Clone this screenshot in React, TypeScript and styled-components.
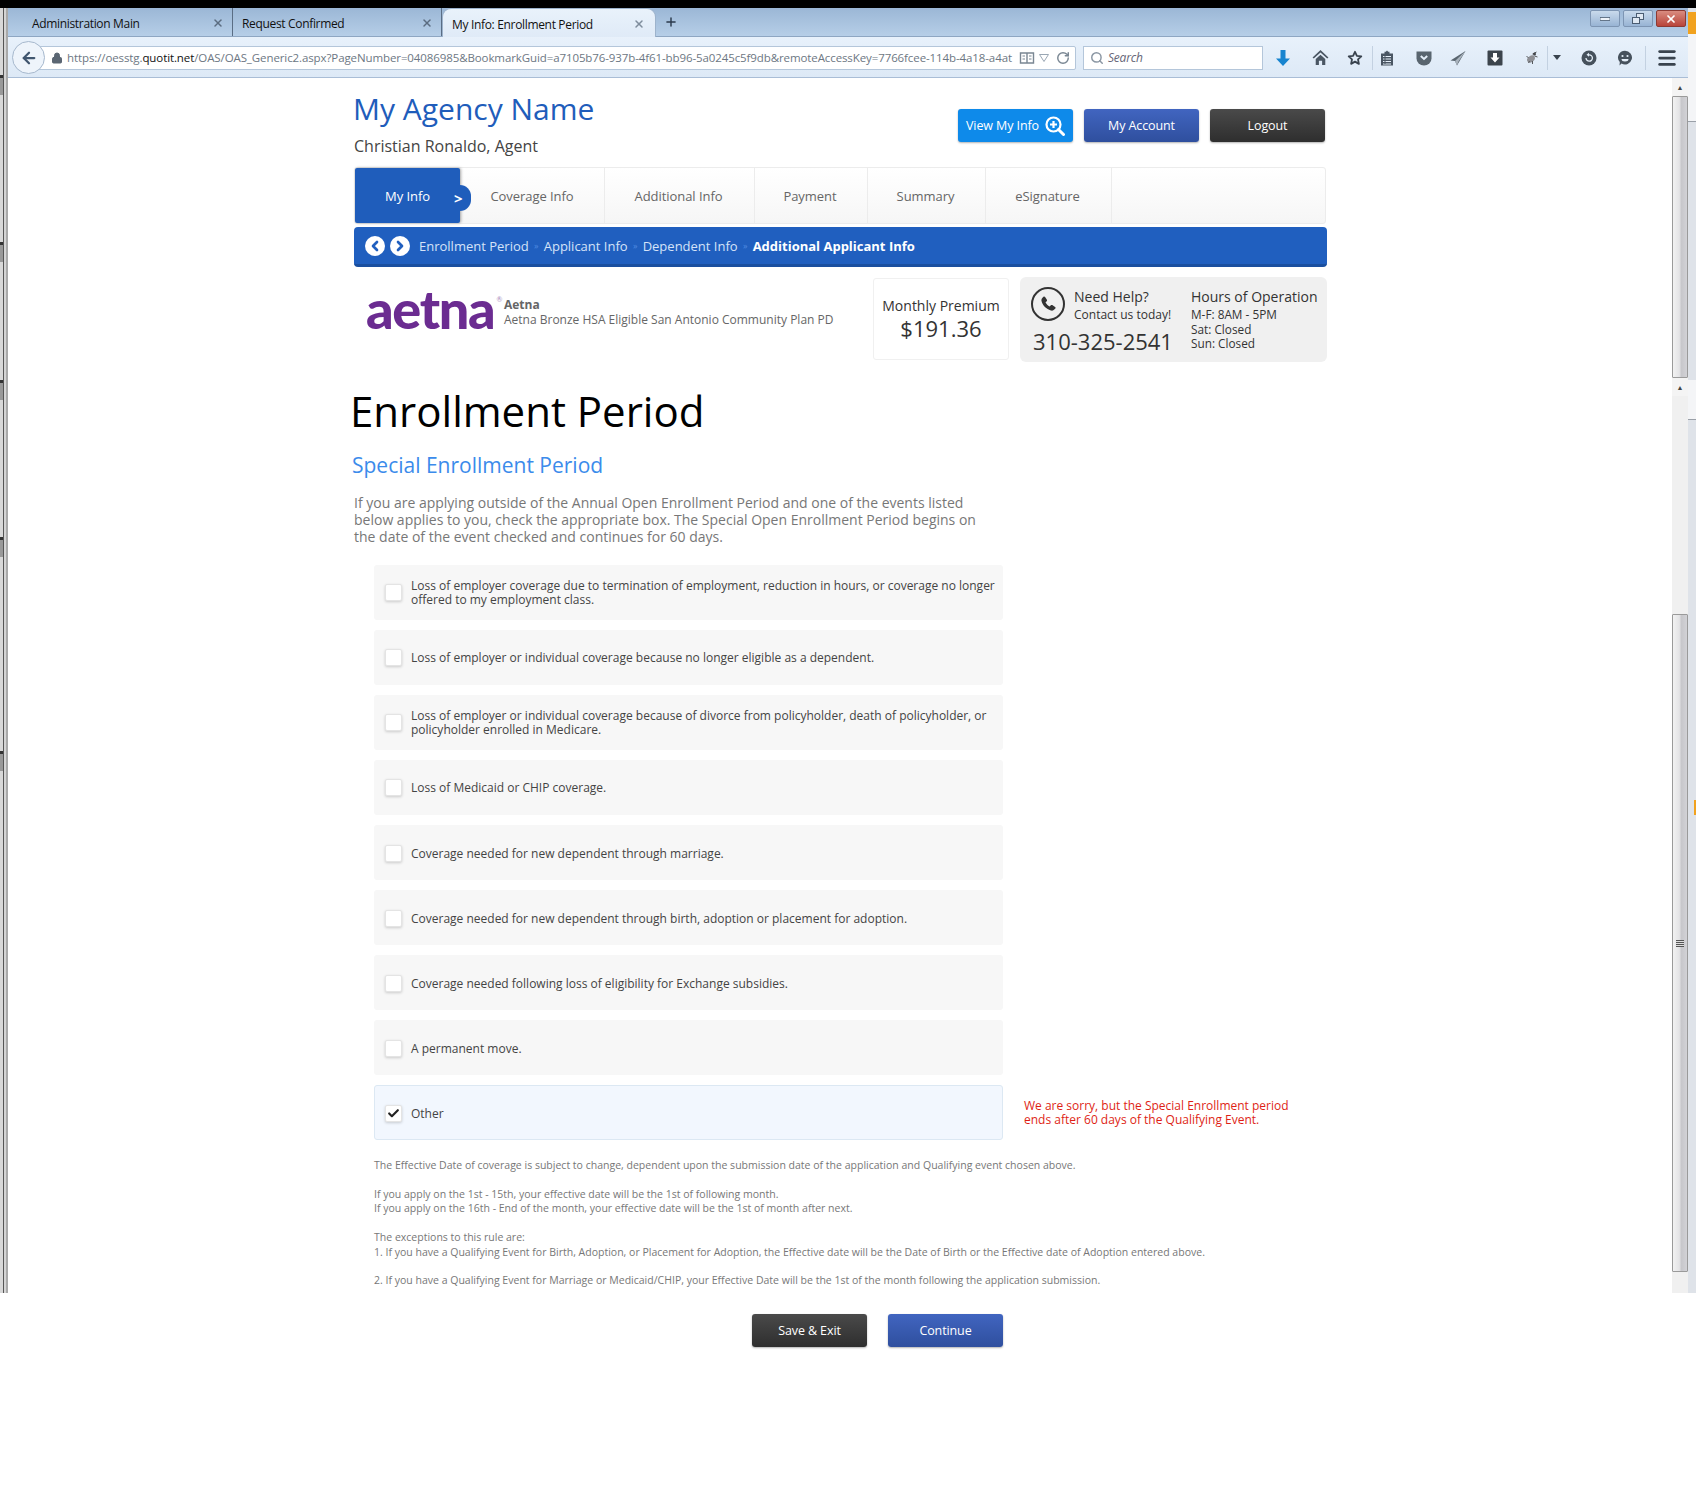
import React from "react";
import styled, { createGlobalStyle } from "styled-components";
import { ArrowLeft, ChevronLeft, ChevronRight, RotateCw, Search as SearchIcon, X, Plus, Lock, Check, Menu } from "lucide-react";

const Global = createGlobalStyle`
  html, body { margin: 0; padding: 0; background: #fff; }
  body { font-family: "Open Sans", "Liberation Sans", sans-serif; color: #333; }
  * { box-sizing: border-box; }
`;

const Page = styled.div`width: 1696px; min-height: 1500px; background: #fff; display: flex; flex-direction: column;`;
const BlackBar = styled.div`height: 8px; background: #000;`;
const Shell = styled.div`display: grid; grid-template-columns: 8px 1664px 16px 8px; grid-template-rows: 70px auto;`;

const LeftStrip = styled.div`
  grid-row: 1 / 3; grid-column: 1; height: 1285px; align-self: start; display: flex; flex-direction: column;
  background: linear-gradient(90deg, #d8d8d8 0 3px, #555 3px 4px, #d4d4d4 4px 6px, #a9a9a9 6px 8px);
`;
const LeftTick = styled.div<{ $top: number }>`
  margin-top: ${p => p.$top}px; height: 20px; width: 3px;
  background: linear-gradient(#333 0 3px, #999 3px);
`;

const Chrome = styled.div`grid-column: 2 / 4; grid-row: 1; display: flex; flex-direction: column;`;
const TabStrip = styled.div`
  height: 29px; display: flex; align-items: stretch; padding-left: 0;
  background: linear-gradient(#9bb7d6, #b6cee7); border-bottom: 1px solid #8ea6c2;
`;
const BrowserTab = styled.div<{ $active?: boolean; $w: number; $pad: number }>`
  width: ${p => p.$w}px; display: flex; align-items: center; justify-content: space-between; padding: ${p => (p.$active ? "1px 10px" : "2px 8px")} 0 ${p => p.$pad}px;
  font-size: 12px; letter-spacing: -0.33px; color: #111; flex-shrink: 0;
  border-right: ${p => (p.$active ? "none" : "1px solid #5a6d84")};
  ${p => p.$active ? `background: linear-gradient(#e9f2fb, #dfeaf7); border-radius: 9px 9px 0 0; height: 30px; border: 1px solid #9db3cc; border-bottom: none;` : ""}
`;
const NewTab = styled.div`display: flex; align-items: center; padding-left: 8px; color: #2b3a4c;`;
const WindowButtons = styled.div`margin: 2px 2px 0 auto; display: flex; gap: 3px; height: 17px;`;
const WinButton = styled.div<{ $close?: boolean }>`
  width: 30px; height: 17px; border-radius: 2px; display: flex; align-items: center; justify-content: center;
  border: 1px solid ${p => (p.$close ? "#8d3a33" : "#7d95b3")};
  background: ${p => (p.$close ? "linear-gradient(#d98c80, #b9443a)" : "linear-gradient(#c9daec, #98b4d4)")};
`;

const NavBar = styled.div`
  height: 41px; display: flex; align-items: center; padding: 1px 0 0 4px;
  background: linear-gradient(#e8f1fb, #dde9f6); border-bottom: 1px solid #a9bdd6;
`;
const BackButton = styled.div`
  width: 33px; height: 33px; border-radius: 50%; background: #eef4fb; border: 1px solid #a6b8cd; display: flex; align-items: center;
  justify-content: center; color: #40566f; flex-shrink: 0; position: relative; z-index: 1;
`;
const UrlBox = styled.div`
  margin-left: -16px; width: 1047px; height: 24px; background: #fff; border: 1px solid #b4c6da; border-radius: 0 2px 2px 0;
  display: flex; align-items: center; padding-left: 21px; gap: 4px; overflow: hidden; flex-shrink: 0;
`;
const UrlText = styled.div`
  width: 948px; overflow: hidden; white-space: nowrap; font-size: 11.5px; letter-spacing: -0.1px; color: #6d7783; flex-shrink: 0;
  b { font-weight: 400; color: #111; }
`;
const SearchBox = styled.div`
  margin-left: 7px; width: 180px; height: 24px; background: #fff; border: 1px solid #b4c6da; display: flex; align-items: center;
  gap: 4px; padding-left: 6px; font-size: 12px; font-style: italic; color: #667; letter-spacing: -0.2px; flex-shrink: 0;
`;
const ToolSlot = styled.div<{ $w: number }>`width: ${p => p.$w}px; display: flex; justify-content: center; align-items: center; flex-shrink: 0; color: #4a5663;`;
const ToolSep = styled.div`width: 1px; height: 24px; background: #c3d1e1; flex-shrink: 0;`;

const Content = styled.main`grid-column: 2; grid-row: 2; padding-left: 346px; background: #fff;`;
const Column = styled.div`width: 974px;`;

const Header = styled.header`display: flex; justify-content: space-between; width: 971px; height: 89px; padding-top: 11px;`;
const AgencyName = styled.h1`margin: 0 0 0 -1px; font-size: 30px; line-height: 40px; font-weight: 400; color: #1f5dbb; letter-spacing: 0;`;
const AgentName = styled.div`margin-top: 5px; font-size: 16px; line-height: 24px; color: #444;`;
const HeaderActions = styled.div`display: flex; gap: 11px; margin-top: 20px;`;
const Button = styled.div<{ $kind: "sky" | "blue" | "dark" }>`
  width: 115px; height: 33px; border-radius: 3px; display: flex; align-items: center; justify-content: center; gap: 6px;
  color: #fff; font-size: 12.5px; letter-spacing: -0.1px; box-shadow: 0 1px 2px rgba(0,0,0,.3);
  background: ${p => p.$kind === "sky" ? "#0e8aea" : p.$kind === "blue" ? "linear-gradient(#4165c0, #2f4f9e)" : "linear-gradient(#4a4a4a, #2e2e2e)"};
`;

const TabBar = styled.nav`
  width: 972px; height: 57px; border: 1px solid #ececec; border-radius: 3px; display: flex;
  background: linear-gradient(#fff, #f6f6f6);
`;
const StepTab = styled.div<{ $w: number; $active?: boolean }>`
  width: ${p => p.$w}px; display: flex; align-items: center; justify-content: center; position: relative; flex-shrink: 0; font-size: 13px; letter-spacing: -0.05px;
  color: ${p => (p.$active ? "#fff" : "#666")}; 
  background: ${p => (p.$active ? "#1f5dbb" : "transparent")};
  border-right: ${p => (p.$active ? "none" : "1px solid #ececec")};
  ${p => p.$active ? "box-shadow: 1px 0 3px rgba(0,0,0,.35); border-radius: 2px;" : ""}
  &:nth-child(n+3) { padding-right: 2px; }
`;
const ActiveNub = styled.div`
  position: absolute; left: 100%; top: 17px; width: 11px; height: 26px; background: #1f5dbb; border-radius: 0 13px 13px 0;
`;
const NubArrow = styled.span`
  position: absolute; left: 99px; top: 17px; color: #fff; font-weight: 700; font-size: 15px; line-height: 26px;
`;

const Crumbs = styled.div`
  margin-top: 3px; width: 973px; height: 40px; background: #205fbf; border-bottom: 3px solid #1a4f9f; border-radius: 4px;
  display: flex; align-items: center; padding-left: 11px; font-size: 13px; color: #cfe0f7;
`;
const CrumbCircle = styled.div<{ $gap: number }>`
  width: 20px; height: 20px; border-radius: 50%; background: #fff; color: #205fbf; display: flex; align-items: center; justify-content: center; margin-right: ${p => p.$gap}px;
`;
const Crumb = styled.span<{ $current?: boolean }>`
  font-weight: ${p => (p.$current ? 700 : 400)}; color: ${p => (p.$current ? "#fff" : "#d5e3f8")}; white-space: nowrap;
`;
const CrumbSep = styled.span`width: 15px; text-align: center; font-size: 9px; color: #4f8ae0;`;

const InfoRow = styled.section`margin-top: 10px; display: flex; height: 85px;`;
const PlanBlock = styled.div`width: 519px; display: flex; padding: 8px 0 0 12px; gap: 6px;`;
const AetnaLogo = styled.div`
  width: 132px; height: 48px; flex-shrink: 0; font-family: Lato, "Open Sans", sans-serif; font-weight: 900; font-size: 54px; line-height: 48px;
  letter-spacing: -1.3px; color: #6b2c91; white-space: nowrap;
  sup { font-size: 7px; font-weight: 400; letter-spacing: 0; color: #a98fc0; vertical-align: 27px; line-height: 0; margin-left: 2px; }
`;
const PlanText = styled.div`
  padding-top: 12px; font-size: 12px; line-height: 15px; color: #666; white-space: nowrap;
  b { display: block; font-weight: 700; }
`;
const PremiumCard = styled.div`
  width: 136px; height: 82px; margin-top: 1px; border: 1px solid #f0f0f0; border-radius: 3px; text-align: center; padding-top: 17px; color: #333;
`;
const PremiumLabel = styled.div`font-size: 14px; line-height: 20px; white-space: nowrap;`;
const PremiumValue = styled.div`font-size: 22px; line-height: 24px;`;
const HelpBox = styled.div`
  margin-left: 11px; width: 307px; height: 85px; background: #f0f0f0; border-radius: 6px; padding: 10px 0 0 11px;
  display: flex; color: #333;
`;
const HelpLeft = styled.div`width: 160px;`;
const HelpTop = styled.div`display: flex; gap: 9px;`;
const PhoneRing = styled.div`width: 34px; height: 34px; border: 2px solid #333; border-radius: 50%; display: flex; align-items: center; justify-content: center;`;
const HelpTitle = styled.div`font-size: 14px; line-height: 20px; white-space: nowrap;`;
const HelpSub = styled.div`font-size: 12px; line-height: 16px; white-space: nowrap;`;
const HelpNumber = styled.div`margin: 3px 0 0 2px; font-size: 22px; line-height: 30px; white-space: nowrap;`;
const HoursList = styled.div`font-size: 11.8px; line-height: 14.5px; white-space: nowrap;`;

const Heading = styled.h2`margin: 24px 0 0 -4px; font-size: 42px; line-height: 50px; font-weight: 400; color: #000; letter-spacing: 0;`;
const SubHeading = styled.h3`margin: 14px 0 0 -2px; font-size: 21px; line-height: 30px; font-weight: 400; color: #3b8beb;`;
const Intro = styled.p`margin: 14px 0 0; width: 625px; font-size: 14px; line-height: 17px; color: #777;`;

const Options = styled.div`margin: 20px 0 0 20px; display: flex; flex-direction: column; gap: 10px;`;
const OptionLine = styled.div`display: flex; gap: 21px; align-items: flex-start;`;
const Option = styled.div<{ $checked?: boolean; $low?: boolean }>`
  width: 629px; height: 55px; border-radius: 3px; display: flex; align-items: center; padding: ${p => (p.$low ? "2px" : "0")} 0 0 ${p => (p.$checked ? "10px" : "11px")}; gap: 9px; flex-shrink: 0;
  background: ${p => (p.$checked ? "#f2f7fe" : "#f7f7f7")};
  border: ${p => (p.$checked ? "1px solid #dce8f3" : "none")};
`;
const CheckBox = styled.div`
  width: 17px; height: 17px; flex-shrink: 0; background: #fff; border: 1px solid #e4e4e4; border-radius: 2px; box-shadow: 0 1px 3px rgba(0,0,0,.18);
  display: flex; align-items: center; justify-content: center; color: #222;
`;
const OptionText = styled.div`font-size: 12px; line-height: 14px; color: #444; letter-spacing: 0;`;
const ErrorText = styled.div`margin-top: 14px; width: 270px; font-size: 12px; line-height: 14px; color: #de1f16;`;

const Notes = styled.div`margin: 18px 0 0 20px; width: 900px; color: #777; font-size: 10.52px; line-height: 14px;`;
const Note = styled.p<{ $gap: number }>`margin: ${p => p.$gap}px 0 0; line-height: 14px; white-space: nowrap;`;
const FooterActions = styled.div`margin: 27px 0 0 398px; display: flex; gap: 21px;`;

const Scrollbar = styled.div`
  grid-column: 3; grid-row: 2; height: 1215px; width: 16px; display: flex; flex-direction: column; align-items: stretch; background: #f0f0f0;
`;
const ScrollArrow = styled.div`
  height: 18px; flex-shrink: 0; display: flex; align-items: center; justify-content: center; color: #444; font-size: 7px; background: #f4f4f4;
`;
const ScrollThumb = styled.div<{ $h: number; $top?: number }>`
  height: ${p => p.$h}px; margin-top: ${p => p.$top ?? 0}px; flex-shrink: 0; border: 1px solid #9a9a9a; border-radius: 1px;
  background: linear-gradient(90deg, #f2f2f2, #e4e4e6 45%, #c7c7cb 60%, #d2d2d6); display: flex; align-items: center; justify-content: center;
`;
const Grip = styled.div`width: 8px; height: 7px; background: repeating-linear-gradient(#555 0 1px, #ddd 1px 2px);`;

const RightStrip = styled.div`
  grid-row: 1 / 3; grid-column: 4; height: 1285px; align-self: start; display: flex; flex-direction: column; background: #dfe3e9;
`;
const RightPiece = styled.div<{ $h: number; $bg: string; $line?: boolean }>`
  height: ${p => p.$h}px; background: ${p => p.$bg}; flex-shrink: 0; border-bottom: ${p => (p.$line ? "1px solid #9aa0a8" : "none")};
`;

const tool = { width: 16, height: 16, viewBox: "0 0 16 16" };

const PhoneGlyph = () => (
  <svg width="20" height="20" viewBox="0 0 24 24">
    <path fill="#333" d="M6.6 3.2c.6-.5 1.5-.4 1.9.3l2.2 3.4c.3.6.3 1.2-.2 1.7L9 10c1 2.2 2.8 4 5 5l1.4-1.5c.5-.5 1.1-.5 1.7-.2l3.4 2.2c.7.4.8 1.3.3 1.9-1.4 1.8-3.3 3-5.3 2.4C10 18.3 5.7 14 4.2 8.5c-.6-2 .6-3.9 2.4-5.3z" />
  </svg>
);

const MagnifyPlus = () => (
  <svg width="20" height="20" viewBox="0 0 20 20" fill="none">
    <circle cx="8.5" cy="8.5" r="7" stroke="#fff" strokeWidth="2.2" />
    <path d="M13.5 13.5L18.5 18.5" stroke="#fff" strokeWidth="3" strokeLinecap="round" />
    <path d="M8.5 5v7M5 8.5h7" stroke="#fff" strokeWidth="2.2" />
  </svg>
);

const Reader = () => (
  <svg {...tool} fill="none" stroke="#7a8793" strokeWidth="1.4"><path d="M1.5 3h13v10h-13zM8 3v10" /><path d="M3.5 6h2.5M3.5 9h2.5M10 6h2.5M10 9h2.5" strokeWidth="1" /></svg>
);
const DownArrow = () => (<svg width="16" height="18" viewBox="0 0 16 18"><path fill="#1784cf" d="M5.5 1h5v8.5H15L8 17 1 9.5h4.5z" /></svg>);
const HomeIcon = () => (<svg width="17" height="17" viewBox="0 0 16 16"><path fill="#4a5663" d="M8 1l7.5 7-1.2 1L8 3.3 1.7 9 .5 8zM3.5 9.5L8 5.5l4.5 4V15H9.5v-4h-3v4h-3z" /></svg>);
const StarIcon = () => (<svg {...tool} fill="none" stroke="#39434e" strokeWidth="1.8"><path d="M8 1.8l1.9 4.1 4.4.5-3.3 3 .9 4.5L8 11.6l-3.9 2.3.9-4.5-3.3-3 4.4-.5z" strokeLinejoin="round" /></svg>);
const ClipIcon = () => (<svg {...tool}><path fill="#4a5663" d="M5.5 1.8h1.3L8 .5l1.2 1.3h1.3V3.5H14V15.5H2V3.5h3.500z" /><path stroke="#e4eef8" strokeWidth="1.1" d="M4 6.500h8M4 9h8M4 11.500h8M4 14h8" /><path stroke="#4a5663" strokeWidth="1" d="M6 6v8" /></svg>);
const PocketIcon = () => (<svg {...tool}><path fill="#59656f" d="M.5 1.500h15v7a7.500 7 0 0 1-15 0z" /><path fill="none" stroke="#e4eef8" strokeWidth="2" d="M4.800 6l3.200 3 3.200-3" /></svg>);
const SendIcon = () => (<svg {...tool}><path fill="#59656f" d="M15.500 1L.5 10.500l4.500.5L7 15.500z" /><path fill="#a9b3bd" d="M15.500 1L5 11l2 4.500 1.500-4z" /></svg>);
const BoxDownIcon = () => (<svg {...tool}><rect x="0.5" y="0.5" width="15" height="15" rx="1" fill="#3c444c" /><path fill="#fff" d="M6 3h4v4.500h2.500L8 12.500 3.500 7.500H6z" /></svg>);
const BugIcon = () => (<svg width="19" height="16" viewBox="0 0 16 16"><ellipse cx="7.5" cy="9" rx="4.200" ry="3" fill="#8e8f94" transform="rotate(-35 7.500 9)" /><path stroke="#55585c" strokeWidth="1" d="M9 4l4-2M11 6l3 1M3 6l2 2M5 13l1-2M9 14l0-3" /><circle cx="11" cy="4" r="1.500" fill="#44474b" /></svg>);
const Caret = () => (<svg width="8" height="5" viewBox="0 0 8 5"><path fill="#39434e" d="M0 0h8L4 5z" /></svg>);
const HistoryIcon = () => (<svg {...tool}><circle cx="8" cy="8" r="7.500" fill="#46515c" /><path d="M5 8a3.200 3.200 0 1 0 3-3.200" fill="none" stroke="#e4eef8" strokeWidth="1.300" /><path fill="#e4eef8" d="M8 2.800v4L5.500 4.800z" /></svg>);
const ChatIcon = () => (<svg {...tool}><path fill="#46515c" d="M8 .8a7 6.800 0 1 1-3.500 12.700L2.500 15.500l.3-3.400A7 6.800 0 0 1 8 .8z" /><circle cx="5.500" cy="6" r="1.100" fill="#e4eef8" /><circle cx="10.500" cy="6" r="1.100" fill="#e4eef8" /><path d="M4.500 9h7a3.500 2.500 0 0 1-7 0z" fill="#e4eef8" /></svg>);

const options = [
  "Loss of employer coverage due to termination of employment, reduction in hours, or coverage no longer offered to my employment class.",
  "Loss of employer or individual coverage because no longer eligible as a dependent.",
  "Loss of employer or individual coverage because of divorce from policyholder, death of policyholder, or policyholder enrolled in Medicare.",
  "Loss of Medicaid or CHIP coverage.",
  "Coverage needed for new dependent through marriage.",
  "Coverage needed for new dependent through birth, adoption or placement for adoption.",
  "Coverage needed following loss of eligibility for Exchange subsidies.",
  "A permanent move.",
];

const ticks = [67, 147, 118, 137, 194];

export default function App() {
  return (
    <Page>
      <Global />
      <BlackBar />
      <Shell>
        <LeftStrip>
          {ticks.map((t, i) => <LeftTick key={i} $top={t} />)}
        </LeftStrip>
        <Chrome>
          <TabStrip>
            <BrowserTab $w={225} $pad={24}>Administration Main<X size={12} strokeWidth={3} color="#5b6c80" /></BrowserTab>
            <BrowserTab $w={209} $pad={9}>Request Confirmed<X size={12} strokeWidth={3} color="#5b6c80" /></BrowserTab>
            <BrowserTab $w={214} $pad={9} $active>My Info: Enrollment Period<X size={12} strokeWidth={3} color="#7f8d9d" /></BrowserTab>
            <NewTab><Plus size={14} strokeWidth={2.5} /></NewTab>
            <WindowButtons>
              <WinButton><svg width="10" height="4"><rect width="10" height="3" y="0.5" fill="#eef3f9" stroke="#4b5d72" strokeWidth="0.8" /></svg></WinButton>
              <WinButton><svg width="12" height="11" fill="#dfe8f2" stroke="#4b5d72"><rect x="4.5" y="0.5" width="7" height="6" /><rect x="0.5" y="4.500" width="7" height="6" /></svg></WinButton>
              <WinButton $close><X size={12} strokeWidth={3.5} color="#fff" /></WinButton>
            </WindowButtons>
          </TabStrip>
          <NavBar>
            <BackButton><ArrowLeft size={18} strokeWidth={3} /></BackButton>
            <UrlBox>
              <Lock size={12} color="#5b6673" fill="#5b6673" style={{ flexShrink: 0 }} />
              <UrlText>https://oesstg.<b>quotit.net</b>/OAS/OAS_Generic2.aspx?PageNumber=04086985&amp;BookmarkGuid=a7105b76-937b-4f61-bb96-5a0245c5f9db&amp;remoteAccessKey=7766fcee-114b-4a18-a4at</UrlText>
              <Reader />
              <svg width="10" height="8"><path d="M0.5 0.5h9L5 7.500z" fill="none" stroke="#9aa7b4" /></svg>
              <RotateCw size={14} color="#7a8793" strokeWidth={2.5} style={{ marginLeft: 3 }} />
            </UrlBox>
            <SearchBox><SearchIcon size={14} color="#8a96a3" strokeWidth={2.5} />Search</SearchBox>
            <ToolSlot $w={40}><DownArrow /></ToolSlot>
            <ToolSlot $w={34}><HomeIcon /></ToolSlot>
            <ToolSlot $w={35}><StarIcon /></ToolSlot>
            <ToolSep />
            <ToolSlot $w={28}><ClipIcon /></ToolSlot>
            <ToolSlot $w={46}><PocketIcon /></ToolSlot>
            <ToolSlot $w={22}><SendIcon /></ToolSlot>
            <ToolSlot $w={52}><BoxDownIcon /></ToolSlot>
            <ToolSlot $w={20}><BugIcon /></ToolSlot>
            <ToolSlot $w={6}></ToolSlot>
            <ToolSep />
            <ToolSlot $w={18}><Caret /></ToolSlot>
            <ToolSlot $w={46}><HistoryIcon /></ToolSlot>
            <ToolSlot $w={26}><ChatIcon /></ToolSlot>
            <ToolSlot $w={7}></ToolSlot>
            <ToolSep />
            <ToolSlot $w={42}><Menu size={22} strokeWidth={3} color="#39434e" /></ToolSlot>
          </NavBar>
        </Chrome>
        <Content>
          <Column>
            <Header>
              <div>
                <AgencyName>My Agency Name</AgencyName>
                <AgentName>Christian Ronaldo, Agent</AgentName>
              </div>
              <HeaderActions>
                <Button $kind="sky">View My Info <MagnifyPlus /></Button>
                <Button $kind="blue">My Account</Button>
                <Button $kind="dark">Logout</Button>
              </HeaderActions>
            </Header>
            <TabBar>
              <StepTab $w={105} $active>My Info<ActiveNub /><NubArrow>&gt;</NubArrow></StepTab>
              <StepTab $w={145}>Coverage Info</StepTab>
              <StepTab $w={150}>Additional Info</StepTab>
              <StepTab $w={113}>Payment</StepTab>
              <StepTab $w={118}>Summary</StepTab>
              <StepTab $w={126}>eSignature</StepTab>
            </TabBar>
            <Crumbs>
              <CrumbCircle $gap={5}><ChevronLeft size={16} strokeWidth={4} /></CrumbCircle>
              <CrumbCircle $gap={9}><ChevronRight size={16} strokeWidth={4} /></CrumbCircle>
              <Crumb>Enrollment Period</Crumb><CrumbSep>»</CrumbSep>
              <Crumb>Applicant Info</Crumb><CrumbSep>»</CrumbSep>
              <Crumb>Dependent Info</Crumb><CrumbSep>»</CrumbSep>
              <Crumb $current>Additional Applicant Info</Crumb>
            </Crumbs>
            <InfoRow>
              <PlanBlock>
                <AetnaLogo>aetna<sup>®</sup></AetnaLogo>
                <PlanText><b>Aetna</b>Aetna Bronze HSA Eligible San Antonio Community Plan PD</PlanText>
              </PlanBlock>
              <PremiumCard>
                <PremiumLabel>Monthly Premium</PremiumLabel>
                <PremiumValue>$191.36</PremiumValue>
              </PremiumCard>
              <HelpBox>
                <HelpLeft>
                  <HelpTop>
                    <PhoneRing><PhoneGlyph /></PhoneRing>
                    <div>
                      <HelpTitle>Need Help?</HelpTitle>
                      <HelpSub>Contact us today!</HelpSub>
                    </div>
                  </HelpTop>
                  <HelpNumber>310-325-2541</HelpNumber>
                </HelpLeft>
                <div>
                  <HelpTitle>Hours of Operation</HelpTitle>
                  <HoursList>M-F: 8AM - 5PM<br />Sat: Closed<br />Sun: Closed</HoursList>
                </div>
              </HelpBox>
            </InfoRow>
            <Heading>Enrollment Period</Heading>
            <SubHeading>Special Enrollment Period</SubHeading>
            <Intro>If you are applying outside of the Annual Open Enrollment Period and one of the events listed below applies to you, check the appropriate box. The Special Open Enrollment Period begins on the date of the event checked and continues for 60 days.</Intro>
            <Options>
              {options.map((o, i) => (
                <Option key={o} $low={i >= 4}><CheckBox /><OptionText>{o}</OptionText></Option>
              ))}
              <OptionLine>
                <Option $checked $low><CheckBox><Check size={13} strokeWidth={4} /></CheckBox><OptionText>Other</OptionText></Option>
                <ErrorText>We are sorry, but the Special Enrollment period ends after 60 days of the Qualifying Event.</ErrorText>
              </OptionLine>
            </Options>
            <Notes>
              <Note $gap={0}>The Effective Date of coverage is subject to change, dependent upon the submission date of the application and Qualifying event chosen above.</Note>
              <Note $gap={15}>If you apply on the 1st - 15th, your effective date will be the 1st of following month.</Note>
              <Note $gap={0}>If you apply on the 16th - End of the month, your effective date will be the 1st of month after next.</Note>
              <Note $gap={15}>The exceptions to this rule are:</Note>
              <Note $gap={1}>1. If you have a Qualifying Event for Birth, Adoption, or Placement for Adoption, the Effective date will be the Date of Birth or the Effective date of Adoption entered above.</Note>
              <Note $gap={14}>2. If you have a Qualifying Event for Marriage or Medicaid/CHIP, your Effective Date will be the 1st of the month following the application submission.</Note>
            </Notes>
            <FooterActions>
              <Button $kind="dark">Save &amp; Exit</Button>
              <Button $kind="blue">Continue</Button>
            </FooterActions>
          </Column>
        </Content>
        <Scrollbar>
          <ScrollArrow>▲</ScrollArrow>
          <ScrollThumb $h={282} />
          <ScrollArrow>▲</ScrollArrow>
          <ScrollThumb $h={658} $top={218}><Grip /></ScrollThumb>
        </Scrollbar>
        <RightStrip>
          <RightPiece $h={4} $bg="#dfe3e9" />
          <RightPiece $h={22} $bg="#f1a21f" />
          <RightPiece $h={88} $bg="#f4f5f7" $line />
          <RightPiece $h={258} $bg="#dfe3e9" />
          <RightPiece $h={40} $bg="#f4f5f7" $line />
          <RightPiece $h={380} $bg="#dfe3e9" />
          <RightPiece $h={15} $bg="linear-gradient(90deg, #dfe3e9 6px, #f1a21f 6px)" />
        </RightStrip>
      </Shell>
    </Page>
  );
}
